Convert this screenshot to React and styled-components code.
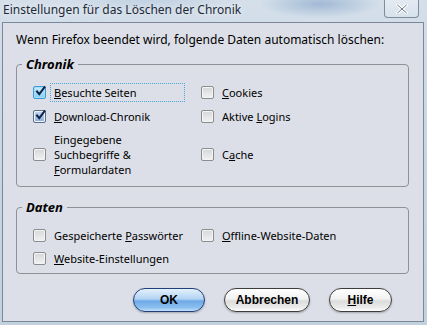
import React from "react";
import styled, { createGlobalStyle } from "styled-components";

const Global = createGlobalStyle`
  html, body { margin: 0; padding: 0; }
  body { width: 427px; height: 325px; overflow: hidden; font-family: "Noto Sans", "Open Sans", sans-serif; }
`;

const Window = styled.div`
  width: 427px;
  height: 325px;
  box-sizing: border-box;
  display: flex;
  flex-direction: column;
  padding: 0 3px 3px 2px;
  background:
    radial-gradient(ellipse 60px 14px at 320px 4px, rgba(120,155,195,0.55), rgba(120,155,195,0) 100%),
    radial-gradient(ellipse 90px 20px at 150px 0px, rgba(160,185,210,0.35), rgba(160,185,210,0) 100%),
    linear-gradient(180deg, #d4dfea 0%, #c9d6e4 40%, #c3d0de 100%);
`;

const TitleBar = styled.div`
  height: 22px;
  display: flex;
  align-items: flex-start;
  justify-content: space-between;
`;

const Title = styled.div`
  font-family: "Noto Sans", sans-serif;
  font-size: 12px;
  color: #1e2a38;
  margin: 2px 0 0 1px;
  line-height: 16px;
  text-shadow: 0 0 6px rgba(255,255,255,0.9);
`;

const CloseBox = styled.div`
  width: 35px;
  height: 18px;
  margin-right: 5px;
  box-sizing: border-box;
  border: 1px solid #7f8c99;
  border-top: none;
  border-radius: 0 0 4px 4px;
  background: linear-gradient(180deg, rgba(255,255,255,0.35), rgba(220,230,240,0.5));
  display: flex;
  align-items: center;
  justify-content: center;
`;

const Panel = styled.div`
  flex: 1;
  border: 1px solid #7a8796;
  background: #dcdfe7;
  display: flex;
  flex-direction: column;
  padding: 8px 14px 0 13px;
`;

const Intro = styled.div`
  font-size: 12px;
  line-height: 18px;
  color: #000;
  margin-bottom: 7px;
`;

const Group = styled.fieldset`
  margin: 0;
  padding: 0;
  border: 1px solid #8e9196;
  border-radius: 4px;
  min-width: 0;
  margin-bottom: ${p => p.$mb || 0}px;
`;

const Legend = styled.legend`
  margin-left: 5px;
  padding: 0 4px;
  font-size: 13px;
  font-weight: bold;
  font-style: italic;
  color: #000;
  line-height: 16px;
`;

const Grid = styled.div`
  display: grid;
  grid-template-columns: 168px 1fr;
  row-gap: ${p => p.$gap}px;
  padding: ${p => p.$pt}px 0 ${p => p.$pb}px 16px;
`;

const Item = styled.label`
  display: flex;
  align-items: center;
  gap: 4px;
  font-size: 11px;
  color: #000;
  min-height: 20px;
`;

const Label = styled.span`
  border: 1px dotted ${p => (p.$focus ? "#4fa7d8" : "transparent")};
  padding: 1px 3px;
  line-height: 15px;
  width: ${p => (p.$focus ? "127px" : "auto")};
`;

const Box = styled.span`
  width: 13px;
  height: 13px;
  flex: none;
  box-sizing: border-box;
  border: 1px solid ${p => (p.$hover ? "#3c9ad6" : p.$checked ? "#5a6f8c" : "#8a8c8f")};
  border-radius: 2px;
  background: ${p =>
    p.$hover
      ? "linear-gradient(180deg,#c9ecfb,#7fd0f3)"
      : p.$checked
      ? "linear-gradient(180deg,#c6d8ee,#8aaedb)"
      : "linear-gradient(180deg,#d6d7d9,#f2f2f3)"};
  box-shadow: inset 0 0 0 1px ${p => (p.$hover ? "#a8ddf5" : "#f4f4f4")};
  position: relative;
  display: flex;
  align-items: center;
  justify-content: center;
`;

const U = styled.span`
  text-decoration: underline;
`;

const Buttons = styled.div`
  display: flex;
  justify-content: flex-end;
  gap: 19px;
  padding: 14px 17px 0 0;
`;

const Button = styled.div`
  width: ${p => p.$w}px;
  height: 24px;
  box-sizing: border-box;
  border-radius: 12px;
  border: 1px solid ${p => (p.$primary ? "#1f3f78" : "#3d3d3d")};
  background: ${p =>
    p.$primary
      ? "linear-gradient(180deg,#e4f1fc 0%,#b3d4f3 45%,#6fa9e6 55%,#8cc0f0 85%,#c6e2fb 100%)"
      : "linear-gradient(180deg,#ffffff 0%,#f2f2f2 45%,#dcdcdc 55%,#ececec 85%,#ffffff 100%)"};
  box-shadow: 0 1px 2px rgba(0,0,0,0.25);
  display: flex;
  align-items: center;
  justify-content: center;
  font-family: "Liberation Sans", Arial, sans-serif;
  font-size: 12px;
  font-weight: bold;
  color: #000;
`;

const Check = () => (
  <svg width="11" height="11" viewBox="0 0 11 11" style={{ position: "absolute", left: 1, top: -1 }}>
    <path d="M2 5.5 L4.3 8.2 L9.5 1.2" fill="none" stroke="#13224d" strokeWidth="2" strokeLinecap="square" />
  </svg>
);

const CB = ({ checked, hover, children, focus }) => (
  <Item>
    <Box $checked={checked} $hover={hover}>{checked && <Check />}</Box>
    <Label $focus={focus}>{children}</Label>
  </Item>
);

export default function App() {
  return (
    <>
      <Global />
      <Window>
        <TitleBar>
          <Title>Einstellungen für das Löschen der Chronik</Title>
          <CloseBox>
            <svg width="12" height="10" viewBox="0 0 12 10">
              <path d="M1.5 1 L10.5 9 M10.5 1 L1.5 9" stroke="#ffffff" strokeWidth="3" strokeLinecap="round" />
              <path d="M1.5 1 L10.5 9 M10.5 1 L1.5 9" stroke="#6f7c8a" strokeWidth="1" strokeLinecap="round" />
            </svg>
          </CloseBox>
        </TitleBar>
        <Panel>
          <Intro>Wenn Firefox beendet wird, folgende Daten automatisch löschen:</Intro>
          <Group $mb={12}>
            <Legend>Chronik</Legend>
            <Grid $gap={4} $pt={10} $pb={7}>
              <CB checked hover focus><U>B</U>esuchte Seiten</CB>
              <CB><U>C</U>ookies</CB>
              <CB checked><U>D</U>ownload-Chronik</CB>
              <CB>Aktive <U>L</U>ogins</CB>
              <CB>Eingegebene<br />Suchbegriffe &amp;<br /><U>F</U>ormulardaten</CB>
              <CB>C<U>a</U>che</CB>
            </Grid>
          </Group>
          <Group>
            <Legend>Daten</Legend>
            <Grid $gap={3} $pt={10} $pb={5}>
              <CB>Gespeicherte <U>P</U>asswörter</CB>
              <CB><U>O</U>ffline-Website-Daten</CB>
              <CB><U>W</U>ebsite-Einstellungen</CB>
            </Grid>
          </Group>
          <Buttons>
            <Button $primary $w={72}>OK</Button>
            <Button $w={86}>Abbrechen</Button>
            <Button $w={63}><span><U>H</U>ilfe</span></Button>
          </Buttons>
        </Panel>
      </Window>
    </>
  );
}
